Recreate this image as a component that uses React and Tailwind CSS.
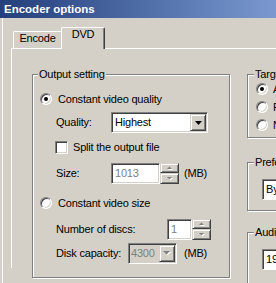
import React from "react";

const sunken =
  "border border-t-[#808080] border-l-[#808080] border-r-white border-b-white shadow-[inset_1px_1px_0_#404040,inset_-1px_-1px_0_#d4d0c8]";
const raised =
  "border border-t-[#d4d0c8] border-l-[#d4d0c8] border-r-[#404040] border-b-[#404040] shadow-[inset_1px_1px_0_#ffffff,inset_-1px_-1px_0_#808080]";
const group =
  "border border-[#808080] shadow-[inset_1px_1px_0_#ffffff,1px_1px_0_#ffffff]";

function Legend({ children, ml = "ml-[5px]" }) {
  return (
    <div className={`-mt-[7px] ${ml} w-fit px-[1px] h-[13px] bg-[#d4d0c8] whitespace-nowrap`}>
      {children}
    </div>
  );
}

function Radio({ checked }) {
  return (
    <div className="w-[12px] h-[12px] shrink-0 rounded-full border border-t-[#808080] border-l-[#808080] border-r-white border-b-white bg-white shadow-[inset_1px_1px_0_#404040,inset_-1px_-1px_0_#d4d0c8] flex items-center justify-center">
      {checked && <div className="w-[4px] h-[4px] rounded-full bg-black" />}
    </div>
  );
}

function Arrow({ disabled }) {
  if (disabled)
    return (
      <svg width="8" height="5" viewBox="0 0 8 5">
        <polygon points="1,1 8,1 4.5,4.5" fill="#ffffff" />
        <polygon points="0,0 7,0 3.5,3.5" fill="#808080" />
      </svg>
    );
  return (
    <svg width="7" height="4" viewBox="0 0 7 4">
      <polygon points="0,0 7,0 3.5,4" fill="#000000" />
    </svg>
  );
}

function SmallTri({ up }) {
  return (
    <svg width="6" height="4" viewBox="0 0 6 4">
      {up ? (
        <>
          <polygon points="1,4 6,4 3.5,1.5" fill="#ffffff" />
          <polygon points="0,3 5,3 2.5,0.5" fill="#808080" />
        </>
      ) : (
        <>
          <polygon points="1,1 6,1 3.5,3.5" fill="#ffffff" />
          <polygon points="0,0 5,0 2.5,2.5" fill="#808080" />
        </>
      )}
    </svg>
  );
}

function Spin() {
  return (
    <div className="flex flex-col w-[19px] h-[21px] shrink-0">
      <div className={`h-[10px] ${raised} bg-[#d4d0c8] flex items-center justify-center`}>
        <SmallTri up />
      </div>
      <div className={`h-[11px] ${raised} bg-[#d4d0c8] flex items-center justify-center`}>
        <SmallTri />
      </div>
    </div>
  );
}

export default function App() {
  return (
    <div className="w-[276px] h-[283px] overflow-hidden bg-[#d4d0c8] font-['Liberation_Sans',Arial,sans-serif] text-[11px] leading-[13px] tracking-[-0.2px] text-black">
      <div className="h-[18px] bg-gradient-to-r from-[#233f7c] to-[#7b99d0] pl-[4px] flex items-center text-white font-bold text-[11.5px] tracking-normal">
        Encoder options
      </div>
      <div className="ml-[2px] border-l border-white h-[265px] pt-[9px] pl-[8px]">
        {/* tabs */}
        <div className="flex items-end pl-[2px] h-[21px]">
          <div className="w-[48px] h-[17px] border-t border-l border-white rounded-tl-[2px] text-center">
            Encode
          </div>
          <div className="relative z-10 -mb-px w-[44px] h-[22px] bg-[#d4d0c8] border-t border-l border-r border-white border-r-[#404040] rounded-tl-[2px] rounded-tr-[2px] shadow-[inset_-1px_0_0_#808080] text-center">
            DVD
          </div>
        </div>
        {/* panel */}
        <div className="border-t border-l border-white h-[220px] flex items-start">
          {/* left group */}
          <div className={`mt-[25px] ml-[20px] w-[198px] h-[204px] shrink-0 ${group} flex flex-col`}>
            <Legend>Output setting</Legend>
            <div className="mt-[8px] h-[20px] flex items-center pl-[7px] gap-[6px]">
              <Radio checked />
              <span>Constant video quality</span>
            </div>
            <div className="mt-[3px] h-[21px] flex items-center pl-[23px]">
              <span className="w-[55px]">Quality:</span>
              <div className={`w-[97px] h-[21px] ${sunken} bg-white p-[1px] flex`}>
                <div className="flex-1 pl-[2px] flex items-center">Highest</div>
                <div className={`w-[16px] h-full ${raised} bg-[#d4d0c8] flex items-center justify-center`}>
                  <Arrow />
                </div>
              </div>
            </div>
            <div className="mt-[8px] h-[13px] flex items-center pl-[22px] gap-[5px]">
              <div className={`w-[13px] h-[13px] ${sunken} bg-white shrink-0`} />
              <span>Split the output file</span>
            </div>
            <div className="mt-[9px] h-[21px] flex items-center pl-[23px]">
              <span className="w-[55px]">Size:</span>
              <div className={`w-[49px] h-[21px] ${sunken} bg-white pl-[3px] flex items-center text-[#808080]`}>
                1013
              </div>
              <Spin />
              <span className="ml-[5px]">(MB)</span>
            </div>
            <div className="mt-[9px] h-[20px] flex items-center pl-[7px] gap-[6px]">
              <Radio />
              <span>Constant video size</span>
            </div>
            <div className="mt-[6px] h-[21px] flex items-center pl-[23px]">
              <span className="w-[111px]">Number of discs:</span>
              <div className={`w-[25px] h-[21px] ${sunken} bg-white pl-[3px] flex items-center text-[#808080]`}>
                1
              </div>
              <Spin />
            </div>
            <div className="mt-[3px] h-[21px] flex items-center pl-[23px]">
              <span className="w-[72px]">Disk capacity:</span>
              <div className={`w-[49px] h-[21px] ${sunken} bg-[#d4d0c8] p-[1px] flex`}>
                <div className="flex-1 pl-[1px] flex items-center text-[#808080]">4300</div>
                <div className={`w-[16px] h-full ${raised} bg-[#d4d0c8] flex items-center justify-center`}>
                  <Arrow disabled />
                </div>
              </div>
              <span className="ml-[7px]">(MB)</span>
            </div>
          </div>
          {/* right column */}
          <div className="mt-[25px] ml-[17px] flex flex-col shrink-0">
            <div className={`w-[100px] h-[64px] ${group} flex flex-col`}>
              <Legend ml="ml-[6px]">Target</Legend>
              <div className="-mt-[1px] h-[18px] flex items-center pl-[8px] gap-[5px]">
                <Radio checked />
                <span>Auto</span>
              </div>
              <div className="h-[18px] flex items-center pl-[8px] gap-[5px]">
                <Radio />
                <span>PAL</span>
              </div>
              <div className="h-[18px] flex items-center pl-[8px] gap-[5px]">
                <Radio />
                <span>NTSC</span>
              </div>
            </div>
            <div className={`mt-[24px] w-[100px] h-[49px] ${group} flex flex-col`}>
              <Legend ml="ml-[6px]">Preferred</Legend>
              <div className="mt-[10px] ml-[14px] w-[80px] h-[21px] bg-white flex items-center pl-[3px] border border-t-[#808080] border-l-[#808080] border-r-white border-b-white shadow-[inset_1px_1px_0_#404040]">
                By size
              </div>
            </div>
            <div className={`mt-[21px] w-[100px] h-[60px] ${group} flex flex-col`}>
              <Legend ml="ml-[6px]">Audio</Legend>
              <div className="mt-[10px] ml-[14px] w-[80px] h-[21px] bg-white flex items-center pl-[3px] border border-t-[#808080] border-l-[#808080] border-r-white border-b-white shadow-[inset_1px_1px_0_#404040]">
                192 kbps
              </div>
            </div>
          </div>
        </div>
      </div>
    </div>
  );
}
